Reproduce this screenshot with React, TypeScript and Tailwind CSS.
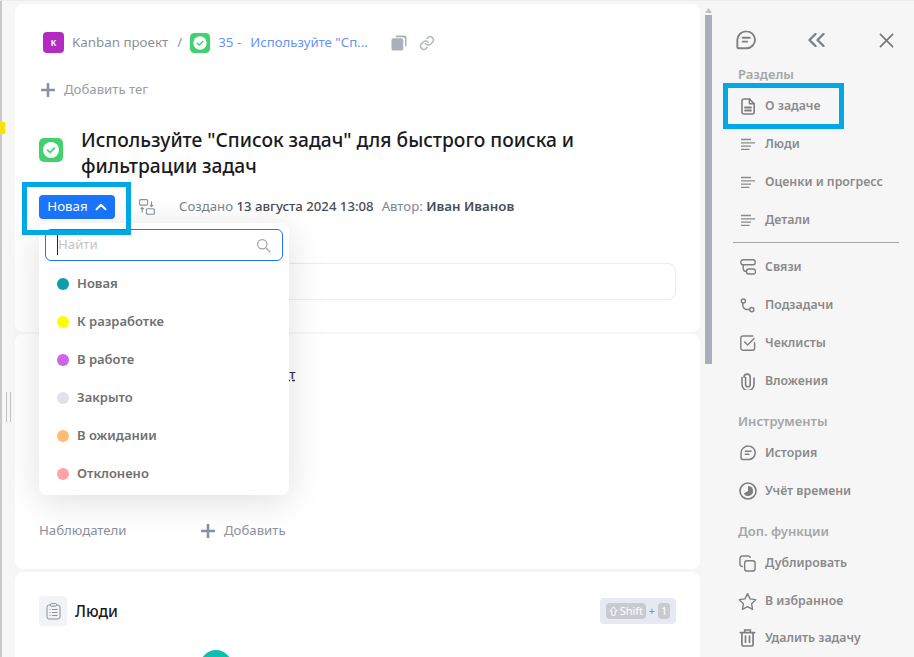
import React from "react";

const Doc = () => (
  <svg width="14" height="17" viewBox="0 0 14 17" fill="none" stroke="#7f7f7f" strokeWidth="1.6" strokeLinejoin="round" strokeLinecap="round">
    <path d="M3 1h5.500l4.700 4.700v8.300a2 2 0 0 1-2 2H3a2 2 0 0 1-2-2V3a2 2 0 0 1 2-2Z" />
    <path d="M8.500 1v4.700h4.700" />
    <path d="M4 9.500h6M4 12.500h6" strokeWidth="1.800" />
  </svg>
);
const Lines = () => (
  <svg width="14" height="13" viewBox="0 0 14 13" fill="none" stroke="#8a8a8a" strokeWidth="1.300">
    <path d="M0 1.500h10M0 4.800h14M0 8.100h10M0 11.400h8.500" />
  </svg>
);
const Relations = () => (
  <svg width="16" height="16" viewBox="0 0 16 16" fill="none" stroke="#7f7f7f" strokeWidth="1.400">
    <rect x="0.800" y="0.800" width="14.400" height="5" rx="2.200" />
    <rect x="6.500" y="10" width="9" height="5" rx="2.200" />
    <path d="M3.200 5.800v3.500A3.300 3.300 0 0 0 6.500 12.500" />
  </svg>
);
const Subtasks = () => (
  <svg width="15" height="15" viewBox="0 0 16 16" fill="none" stroke="#7f7f7f" strokeWidth="1.500">
    <circle cx="3.600" cy="3.200" r="2.200" />
    <circle cx="12.600" cy="12.400" r="2.200" />
    <path d="M3 5.400v2.100a4.600 4.600 0 0 0 4.600 4.700h2.800" />
  </svg>
);
const Check = () => (
  <svg width="16" height="16" viewBox="0 0 16 16" fill="none" stroke="#7f7f7f" strokeWidth="1.400" strokeLinecap="round" strokeLinejoin="round">
    <path d="M14.600 7.800v5.400a2 2 0 0 1-2 2H2.800a2 2 0 0 1-2-2V3a2 2 0 0 1 2-2h10" />
    <path d="m4.600 7 3 3 6.400-6.500" />
  </svg>
);
const Clip = () => (
  <svg width="14" height="17" viewBox="0 0 14 17" fill="none" stroke="#7f7f7f" strokeWidth="1.600" strokeLinecap="round">
    <path d="M4.600 4.500v7a2.300 2.300 0 0 0 4.600 0V4.200a3.100 3.100 0 0 0-6.200 0v.1M1 4.500v7a6 6 0 0 0 12 0V5" />
  </svg>
);
const Bubble = ({ s = 16 }: { s?: number }) => (
  <svg width={s} height={s} viewBox="0 0 18 18" fill="none" stroke="#7f7f7f" strokeWidth="1.700" strokeLinecap="round" strokeLinejoin="round">
    <path d="M9.500 1.200a7.600 7.600 0 0 1 0 15.200H2.600c-.9 0-1.400-.6-1.400-1.400V9a7.900 7.900 0 0 1 8.300-7.800Z" />
    <path d="M6 7h6.400M6 10.500h4" />
  </svg>
);
const Pie = () => (
  <svg width="18" height="18" viewBox="0 0 18 18">
    <circle cx="9" cy="9" r="8" fill="none" stroke="#7f7f7f" strokeWidth="1.600" />
    <path d="M9 4a5 5 0 1 1-4.300 7.500L9 9Z" fill="#7f7f7f" />
  </svg>
);
const Copy = () => (
  <svg width="17" height="17" viewBox="0 0 18 18" fill="none" stroke="#7f7f7f" strokeWidth="1.500" strokeLinecap="round">
    <rect x="6" y="6" width="11" height="11" rx="2.500" />
    <path d="M3.500 12.200A2.500 2.500 0 0 1 1 9.700V3.500A2.500 2.500 0 0 1 3.500 1h6.200a2.500 2.500 0 0 1 2.300 1.500" />
  </svg>
);
const Star = () => (
  <svg width="20" height="19" viewBox="0 0 21 20" fill="none" stroke="#7f7f7f" strokeWidth="1.500" strokeLinejoin="round">
    <path d="m10.500 1.300 2.800 5.800 6.300.9-4.600 4.400 1.100 6.300-5.600-3-5.600 3 1.100-6.300L1.400 8l6.300-.9Z" />
  </svg>
);
const Trash = () => (
  <svg width="17" height="18" viewBox="0 0 16 18" fill="none" stroke="#7f7f7f" strokeWidth="1.700" strokeLinecap="round">
    <path d="M.8 3.600h14.400M5.200 3.200V1h5.600v2.200M2.400 3.800v11.400A1.900 1.900 0 0 0 4.300 17h7.400a1.900 1.900 0 0 0 1.900-1.800V3.800M6 7.200v6M10 7.200v6" />
  </svg>
);
const Plus = () => (
  <svg width="16" height="16" viewBox="0 0 16 16" fill="none" stroke="#8a91a3" strokeWidth="2.600">
    <path d="M8 1v14M1 8h14" />
  </svg>
);
const StatusIcon = ({ size }: { size: number }) => (
  <svg width={size} height={size} viewBox="0 0 24 24">
    <rect width="24" height="24" rx="5" fill="#41d26f" />
    <circle cx="12" cy="12" r="8" fill="#fff" />
    <path d="m8.600 12.200 2.400 2.300 4.400-4.400" fill="none" stroke="#41d26f" strokeWidth="1.700" strokeLinecap="round" strokeLinejoin="round" />
  </svg>
);

const navGroups = [
  { icon: <Lines />, label: "Люди" },
  { icon: <Lines />, label: "Оценки и прогресс" },
  { icon: <Lines />, label: "Детали" },
];
const navLinks = [
  { icon: <Relations />, label: "Связи" },
  { icon: <Subtasks />, label: "Подзадачи" },
  { icon: <Check />, label: "Чеклисты" },
  { icon: <Clip />, label: "Вложения" },
];

const NavRow = ({ icon, label }: { icon: React.ReactNode; label: string }) => (
  <div className="flex h-[38px] items-center">
    <span className="flex w-[27px] justify-center pr-[8px]">{icon}</span>
    <span className="whitespace-nowrap text-[12.3px] font-semibold text-[#8a8a8a]">{label}</span>
  </div>
);
const NavTitle = ({ children }: { children: React.ReactNode }) => (
  <div className="text-[13px] font-semibold leading-[18px] text-[#a6a6a6]">{children}</div>
);

const statuses = [
  ["Новая", "bg-[#0f9bab]"],
  ["К разработке", "bg-[#fdfd00]"],
  ["В работе", "bg-[#d064e6]"],
  ["Закрыто", "bg-[#dfe2e8]"],
  ["В ожидании", "bg-[#ffbd73]"],
  ["Отклонено", "bg-[#ffa3a8]"],
];

export default function App() {
  return (
    <div className="relative flex h-[657px] w-[914px] overflow-hidden border-t border-[#ececec] bg-[#f6f6f7] font-['Noto_Sans',sans-serif]">
      {/* backdrop peeking at the left edge */}
      <div className="w-[2px] shrink-0 bg-[#c9c9c9]" />
      <div className="relative w-[13px] shrink-0 bg-[#f7f7f7]">
        <div className="absolute -left-[2px] top-[121px] h-[12px] w-[5px] bg-[#f2e600]" />
        <div className="absolute left-[4px] top-[391px] h-[30px] w-[5px] border-x border-[#c4c4c4]" />
      </div>

      {/* main column */}
      <div className="-mt-px flex h-[658px] w-[685px] shrink-0 flex-col pt-[4px]">
        <div className="h-[328px] shrink-0 rounded-[8px] bg-white px-[24px] pt-[28px]">
          <div className="flex h-[21px] items-center pl-[4px] text-[13.35px]">
            <span className="flex h-[21px] w-[21px] items-center justify-center rounded-[4px] bg-[#b32bc0] text-[8px] font-bold text-white">К</span>
            <span className="ml-[8px] text-[#8a919c]">Kanban проект</span>
            <span className="ml-[9px] text-[#8a919c]">/</span>
            <span className="ml-[8px]"><StatusIcon size={20} /></span>
            <span className="ml-[8px] text-[#6a93f7]">35 -</span>
            <span className="ml-[9px] w-[118px] whitespace-pre text-[13.2px] text-[#6a93f7]">Используйте "Сп...</span>
            <svg className="ml-[23px]" width="16" height="16" viewBox="0 0 17 17" fill="#aab0ba">
              <rect x="0.500" y="3.500" width="12.500" height="13" rx="2" />
              <path d="M5 1.900C5 1 5.600.5 6.500.5H14.500c1.100 0 2 .9 2 2v8c0 .9-.5 1.500-1.600 1.600V4.600c0-1.300-.9-2.300-2.300-2.300H5Z" />
            </svg>
            <svg className="ml-[12px]" width="16" height="16" viewBox="0 0 24 24" fill="none" stroke="#b6bbc4" strokeWidth="2.400" strokeLinecap="round">
              <path d="M10 13a5 5 0 0 0 7.500.5l3-3a5 5 0 0 0-7-7l-1.700 1.700" />
              <path d="M14 11a5 5 0 0 0-7.500-.5l-3 3a5 5 0 0 0 7 7l1.700-1.700" />
            </svg>
          </div>

          <div className="mt-[27px] flex h-[20px] items-center pl-[1px] text-[13.2px] text-[#989ca6]">
            <Plus />
            <span className="ml-[8px]">Добавить тег</span>
          </div>

          <div className="mt-[27px] flex">
            <div className="mt-[11px] w-[42px] shrink-0"><StatusIcon size={24} /></div>
            <h1 className="w-[560px] text-[19.2px] font-medium leading-[26px] text-[#1a1a1f]">
              Используйте "Список задач" для быстрого поиска и фильтрации задач
            </h1>
          </div>

          <div className="mt-[16px] flex items-center">
            <div className="flex h-[24px] w-[76px] items-center justify-center gap-[7px] rounded-[4px] bg-[#1a76ff] text-[13.3px] text-white">
              Новая
              <svg width="12" height="8" viewBox="0 0 12 8" fill="none" stroke="#fff" strokeWidth="2" strokeLinecap="round" strokeLinejoin="round"><path d="m1.500 6.200 4.500-4.500 4.500 4.500" /></svg>
            </div>
            <svg className="ml-[24px]" width="16" height="16" viewBox="0 0 16 16" fill="none" stroke="#8a919c" strokeWidth="1.100">
              <rect x="0.600" y="0.600" width="8" height="5.500" rx="1" />
              <rect x="7.400" y="9.800" width="8" height="5.500" rx="1" />
              <path d="M12.500 2.500v4.700M11 6l1.500 1.500L14 6M3.200 13.500V8.800M1.700 10l1.500-1.500L4.700 10" />
            </svg>
            <div className="ml-[24px] flex gap-[8px] whitespace-pre text-[13.2px]">
              <span className="text-[#7d8490]">Создано <span className="font-medium text-[#4a4d57]">13 августа 2024 13:08</span></span>
              <span className="text-[#7d8490]">Автор: <span className="font-semibold text-[13.3px] text-[#4a4d57]">Иван Иванов</span></span>
            </div>
          </div>

          <div className="mt-[44px] h-[37px] rounded-[8px] border border-[#ebecf1]" />
        </div>

        <div className="relative mt-[2px] h-[235px] shrink-0 rounded-[8px] bg-white">
          <span className="absolute left-[267px] top-[31px] text-[13px] font-medium text-[#32343a] underline decoration-dashed">кт</span>
          <div className="absolute left-[24px] top-[187px] text-[13.2px] text-[#8a919c]">Наблюдатели</div>
          <div className="absolute left-[185px] top-[187px] flex items-center text-[13.2px] text-[#8d93a3]">
            <Plus />
            <span className="ml-[8px]">Добавить</span>
          </div>
        </div>

        <div className="relative mt-[3px] flex-1 rounded-t-[8px] bg-white pl-[24px] pt-[24px]">
          <div className="flex items-center">
            <span className="flex h-[30px] w-[28px] items-center justify-center rounded-[4px] bg-[#f1f3f7]">
              <svg width="15" height="17" viewBox="0 0 15 17" fill="none" stroke="#8a919c" strokeWidth="1">
                <rect x="1" y="2" width="13" height="14" rx="2" />
                <rect x="4.500" y="0.600" width="6" height="2.600" rx="1" fill="#f1f3f7" />
                <path d="M3.500 6.500h1M6 6.500h5.500M3.500 9.500h1M6 9.500h5.500M3.500 12.500h1M6 12.500h5.500" />
              </svg>
            </span>
            <span className="relative top-px ml-[8px] text-[15.500px] font-medium text-[#1a1a1f]">Люди</span>
            <div className="ml-auto mr-[24px] flex h-[26px] w-[76px] items-center justify-center gap-[3px] rounded-[4px] bg-[#e6e9f2] text-[11px] text-[#8a919c]">
              <span className="flex h-[16px] w-[40px] items-center justify-center gap-[2px] rounded-[4px] bg-[#c8cad1] text-white">
                <svg width="9" height="10" viewBox="0 0 9 10" fill="none" stroke="#fff" strokeWidth="1"><path d="M4.500.8.800 5h2v4.200h3.400V5h2Z" /></svg>
                Shift
              </span>
              <span>+</span>
              <span className="flex h-[16px] w-[12px] items-center justify-center rounded-[4px] bg-[#c8cad1] text-white">1</span>
            </div>
          </div>
          <div className="absolute left-[185px] top-[78px] h-[32px] w-[32px] rounded-full bg-[#10bfb0]" />
        </div>
      </div>

      {/* scrollbar */}
      <div className="relative w-[12px] shrink-0">
        <svg className="absolute left-[5px] top-[7px]" width="7" height="5" viewBox="0 0 7 5" fill="#c2c2c2"><path d="M3.500 0 7 5H0Z" /></svg>
        <div className="absolute left-[5px] top-[14px] h-[349px] w-[7px] bg-[#a9aeba]" />
      </div>

      {/* side navigation */}
      <aside className="flex-1 pl-[26px] pr-[14px] pt-[27px]">
        <div className="-ml-[2px] flex h-[24px] items-center">
          <Bubble s={20} />
          <svg className="ml-[52px]" width="17" height="14" viewBox="0 0 17 14" fill="none" stroke="#79808f" strokeWidth="2.400" strokeLinecap="round" strokeLinejoin="round"><path d="M7.500 1 1.500 7l6 6M15.500 1l-6 6 6 6" /></svg>
          <svg className="ml-[54px]" width="15" height="15" viewBox="0 0 16 16" fill="none" stroke="#757575" strokeWidth="1.700"><path d="m1 1 14 14M15 1 1 15" /></svg>
        </div>
        <div className="mt-[13px]"><NavTitle>Разделы</NavTitle></div>
        <div className="mt-[4px]"><NavRow icon={<Doc />} label="О задаче" /></div>
        {navGroups.map((n) => <NavRow key={n.label} {...n} />)}
        <div className="-ml-[5px] mt-[3px] mb-[5px] h-px w-[166px] bg-[#a8a8a8]" />
        {navLinks.map((n) => <NavRow key={n.label} {...n} />)}
        <div className="mt-[12px]"><NavTitle>Инструменты</NavTitle></div>
        <div className="mt-[4px]"><NavRow icon={<Bubble />} label="История" /></div>
        <NavRow icon={<Pie />} label="Учёт времени" />
        <div className="mt-[12px]"><NavTitle>Доп. функции</NavTitle></div>
        <div className="mt-[4px]"><NavRow icon={<Copy />} label="Дублировать" /></div>
        <NavRow icon={<Star />} label="В избранное" />
        <div className="-mt-px"><NavRow icon={<Trash />} label="Удалить задачу" /></div>
      </aside>

      {/* status dropdown */}
      <div className="absolute left-[39px] top-[222px] h-[272px] w-[250px] rounded-[8px] bg-white px-[6px] pt-[6px] shadow-[0_6px_36px_rgba(0,0,0,0.13)]">
        <div className="relative flex h-[32px] items-center rounded-[6px] border border-[#1a76ff] pl-[12px] text-[13.2px] text-[#c4c4c4]">
          <span className="absolute left-[11px] top-[5px] h-[20px] w-px bg-[#222]" />
          Найти
          <svg className="ml-auto mr-[11px]" width="15" height="15" viewBox="0 0 24 24" fill="none" stroke="#a3a3a3" strokeWidth="2"><circle cx="10" cy="10" r="7.500" /><path d="m16 16 7 7" /></svg>
        </div>
        <div className="mt-[4px]">
          {statuses.map(([label, color]) => (
            <div key={label} className="flex h-[38px] items-center pl-[12px]">
              <span className={`h-[12px] w-[12px] rounded-full ${color}`} />
              <span className="ml-[8px] text-[13px] font-semibold text-[#707070]">{label}</span>
            </div>
          ))}
        </div>
      </div>

      {/* highlight frames */}
      <div className="pointer-events-none absolute left-[22px] top-[181px] h-[53px] w-[109px] border-[5px] border-[#00a8e8]" />
      <div className="pointer-events-none absolute left-[723px] top-[82px] h-[46px] w-[121px] border-[5px] border-[#00a8e8]" />
    </div>
  );
}
